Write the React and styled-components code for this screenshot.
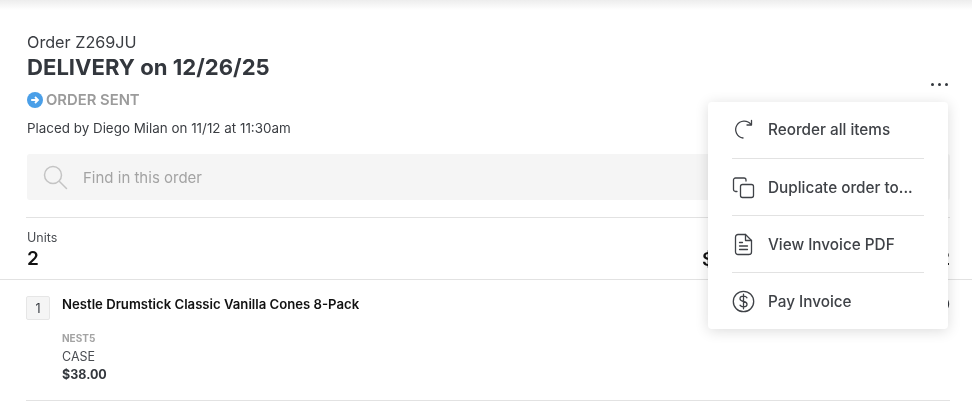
import React from 'react'
import styled, { createGlobalStyle } from 'styled-components'

const GlobalStyle = createGlobalStyle`
  html, body {
    margin: 0;
    background: #fff;
    height: 412px;
    overflow: hidden;
  }
  body {
    font-family: 'Inter', 'Open Sans', sans-serif;
    color: #33373d;
  }
`

const Page = styled.div`
  position: relative;
  width: 972px;
  height: 412px;
  overflow: hidden;
  box-sizing: border-box;
  padding-top: 32px;
  will-change: transform;
  &::before {
    content: '';
    position: absolute;
    top: 0;
    left: 0;
    right: 0;
    height: 10px;
    background: linear-gradient(#ededed, #fff);
  }
`

const Header = styled.header`
  padding-left: 27px;
`

const OrderId = styled.div`
  font-size: 16.2px;
  line-height: 20px;
  color: #3a3d42;
`

const Title = styled.h1`
  margin: 0;
  font-size: 22.1px;
  line-height: 30px;
  font-weight: 700;
  color: #33373d;
`

const Status = styled.div`
  display: flex;
  align-items: center;
  gap: 3px;
  margin-top: 8px;
  font-size: 14.8px;
  line-height: 20px;
  font-weight: 600;
  color: #9b9b9b;
`

const Placed = styled.div`
  margin-top: 9px;
  font-size: 13.4px;
  line-height: 18px;
  color: #3a3d42;
`

const Search = styled.div`
  display: flex;
  align-items: center;
  gap: 15px;
  height: 46px;
  margin: 17px 22px 0 27px;
  padding-left: 16px;
  border-radius: 3px;
  background: #f5f5f5;
  font-size: 15px;
  color: #a3a3a3;
`

const Totals = styled.div`
  display: grid;
  grid-template-columns: 675px 1fr auto;
  height: 62px;
  margin: 17px 22px 0 26px;
  border-top: 1px solid #e2e2e2;
  box-sizing: border-box;
  padding: 12px 0 0 1px;
`

const TotalCell = styled.div`
  padding-top: ${(p) => (p.$noLabel ? '17px' : '0')};
`

const TotalLabel = styled.div`
  font-size: 12.5px;
  line-height: 16px;
  color: #4a4d52;
`

const TotalValue = styled.div`
  margin-top: 1px;
  font-size: 19px;
  line-height: 24px;
  font-weight: 600;
  color: #111;
`

const Rule = styled.div`
  height: 1px;
  background: #e2e2e2;
`

const Item = styled.div`
  display: flex;
  gap: 12px;
  height: 121px;
  margin: 0 22px 0 26px;
  padding-top: 16px;
  box-sizing: border-box;
  border-bottom: 1px solid #e2e2e2;
`

const Qty = styled.div`
  width: 22px;
  height: 22px;
  display: flex;
  align-items: center;
  justify-content: center;
  border: 1px solid #e6e6e6;
  border-radius: 2px;
  background: #f5f5f5;
  font-size: 12.5px;
  color: #33373d;
`

const ItemBody = styled.div`
  display: flex;
  flex-direction: column;
  flex: 1;
`

const ItemTop = styled.div`
  display: flex;
  justify-content: space-between;
`

const ItemName = styled.div`
  font-size: 13.15px;
  line-height: 17px;
  font-weight: 600;
  color: #111;
`

const ItemTotal = styled.div`
  font-size: 13px;
  line-height: 17px;
  color: #33373d;
`

const Sku = styled.div`
  margin-top: 18px;
  font-size: 10px;
  line-height: 14px;
  font-weight: 700;
  color: #a3a3a3;
`

const Unit = styled.div`
  margin-top: 4px;
  font-size: 12.5px;
  line-height: 16px;
  color: #4a4d52;
`

const Price = styled.div`
  margin-top: 2px;
  font-size: 12.5px;
  line-height: 16px;
  font-weight: 700;
  color: #33373d;
`

const More = styled.div`
  position: absolute;
  top: 83px;
  left: 931px;
  display: flex;
  gap: 4px;
`

const Dot = styled.span`
  width: 3px;
  height: 3px;
  border-radius: 50%;
  background: #33373d;
`

const Menu = styled.div`
  position: absolute;
  top: 102px;
  left: 708px;
  width: 240px;
  height: 227px;
  box-sizing: border-box;
  padding: 0 24px;
  border-radius: 4px;
  background: #fff;
  box-shadow: 0 2px 14px rgba(0, 0, 0, 0.14);
`

const MenuItem = styled.div`
  display: flex;
  align-items: center;
  gap: 13px;
  height: 57px;
  box-sizing: border-box;
  padding-bottom: ${(p) => (p.$first ? '2px' : '0')};
  font-size: 15.3px;
  font-weight: 500;
  color: #3f4247;
  border-bottom: ${(p) => (p.$last ? 'none' : '1px solid #e2e2e2')};
`

const IconBox = styled.svg`
  width: 23px;
  height: 23px;
  flex: none;
  fill: none;
  stroke: #3f4247;
  stroke-width: 1.3;
  stroke-linecap: round;
  stroke-linejoin: round;
`

const menu = [
  { label: 'Reorder all items', icon: <><path d="M19 6.500A8.500 8.500 0 1 0 11 20" /><path d="M19.500 2.500v4.500H15" /></> },
  { label: 'Duplicate order to...', icon: <><rect x="8.500" y="8.500" width="13" height="13" rx="2" /><path d="M5 15.500H3.500a2 2 0 0 1-2-2V4a2 2 0 0 1 2-2h8.500a2 2 0 0 1 2 2v1" /></> },
  { label: 'View Invoice PDF', icon: <><path d="M13.500 1.500H6a2.500 2.500 0 0 0-2.500 2.500v15A2.500 2.500 0 0 0 6 21.500h11a2.500 2.500 0 0 0 2.500-2.500V7.500z" /><path d="M13.500 1.500v6h6" /><path d="M7.500 9.500h3M7.500 13h8M7.500 16.500h8" /></> },
  { label: 'Pay Invoice', icon: <><circle cx="11.500" cy="11.500" r="10.200" /><path d="M15 7.800c-.6-1-1.900-1.600-3.500-1.600-2 0-3.500 1-3.500 2.600s1.500 2.300 3.500 2.700 3.500 1.100 3.500 2.700-1.500 2.600-3.500 2.600c-1.600 0-2.900-.6-3.500-1.600M11.500 4.200v14.600" /></> },
]

export default function App() {
  return (
    <Page>
      <GlobalStyle />
      <Header>
        <OrderId>Order Z269JU</OrderId>
        <Title>DELIVERY on 12/26/25</Title>
        <Status>
          <svg width="16" height="16" viewBox="0 0 16 16">
            <circle cx="8" cy="8" r="8" fill="#4a9fe8" />
            <path d="M4.200 8h7M8 5l3 3-3 3" fill="none" stroke="#fff" strokeWidth="1.800" />
          </svg>
          ORDER SENT
        </Status>
        <Placed>Placed by Diego Milan on 11/12 at 11:30am</Placed>
      </Header>
      <Search>
        <svg width="25" height="25" viewBox="0 0 25 25" fill="none" stroke="#c4c4c4" strokeWidth="1.500">
          <circle cx="10" cy="10" r="8.500" />
          <path d="M16.500 16.500l7 7" strokeLinecap="round" />
        </svg>
        Find in this order
      </Search>
      <Totals>
        <TotalCell>
          <TotalLabel>Units</TotalLabel>
          <TotalValue>2</TotalValue>
        </TotalCell>
        <TotalCell $noLabel>
          <TotalValue>$76.00</TotalValue>
        </TotalCell>
        <TotalCell>
          <TotalLabel>Date</TotalLabel>
          <TotalValue>11/12</TotalValue>
        </TotalCell>
      </Totals>
      <Rule />
      <Item>
        <Qty>1</Qty>
        <ItemBody>
          <ItemTop>
            <ItemName>Nestle Drumstick Classic Vanilla Cones 8-Pack</ItemName>
            <ItemTotal>$76.00</ItemTotal>
          </ItemTop>
          <Sku>NEST5</Sku>
          <Unit>CASE</Unit>
          <Price>$38.00</Price>
        </ItemBody>
      </Item>
      <More><Dot /><Dot /><Dot /></More>
      <Menu>
        {menu.map((m, i) => (
          <MenuItem key={m.label} $first={i === 0} $last={i === menu.length - 1}>
            <IconBox viewBox="0 0 23 23">{m.icon}</IconBox>
            {m.label}
          </MenuItem>
        ))}
      </Menu>
    </Page>
  )
}
